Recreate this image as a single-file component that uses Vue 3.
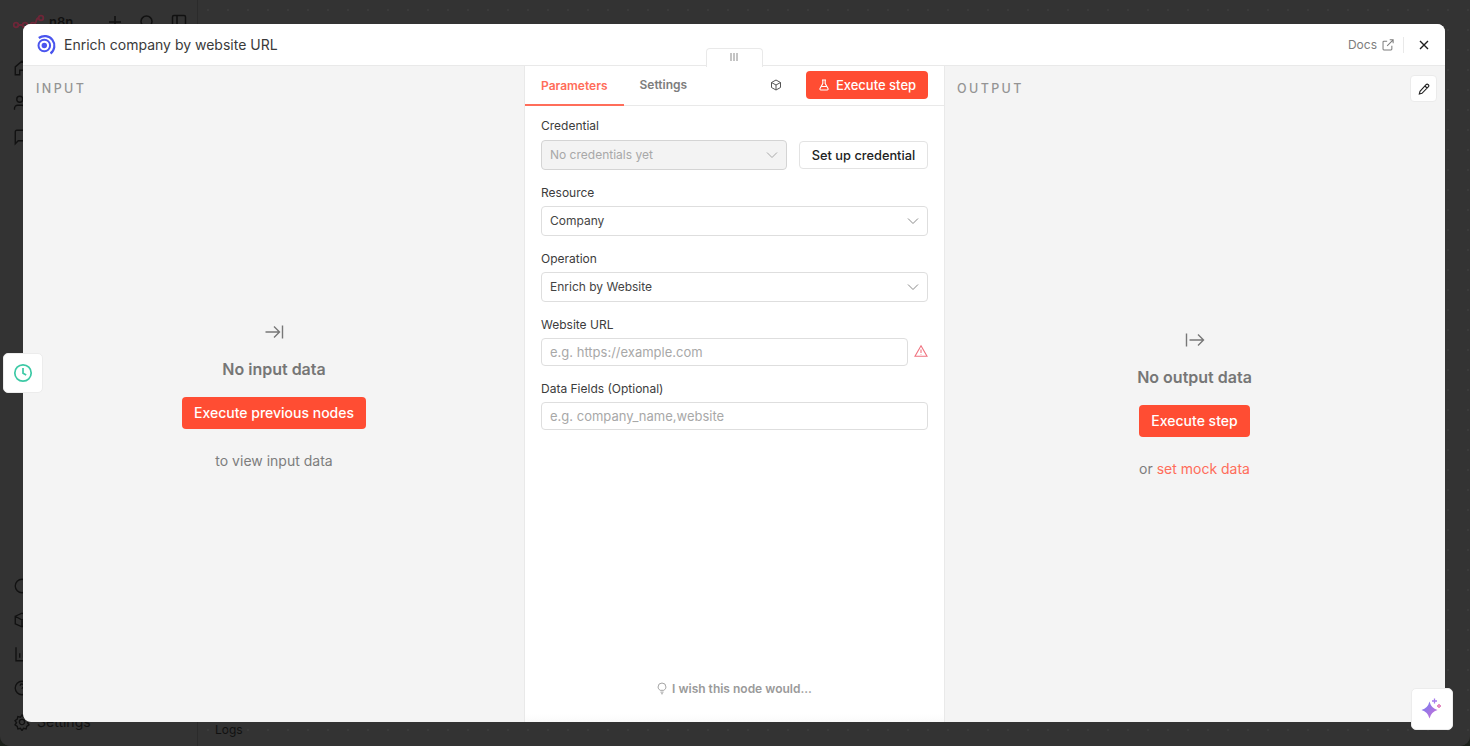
<script setup>
const sideTop = [
  'M3 10.500 12 3l9 7.500V21h-6v-6H9v6H3z',
  'M16 21v-2a4 4 0 0 0-4-4H6a4 4 0 0 0-4 4v2M9 11a4 4 0 1 0 0-8 4 4 0 0 0 0 8z',
  'M21 15a2 2 0 0 1-2 2H7l-4 4V5a2 2 0 0 1 2-2h14a2 2 0 0 1 2 2z'
]
const sideBottom = [
  'M12 3a9 9 0 1 0 0 18 9 9 0 0 0 0-18z',
  'M3 7l9-4 9 4v10l-9 4-9-4zM3 7l9 5 9-5M12 12v9',
  'M4 3v18h17M9 17v-6M14 17V7M19 17v-9',
  'M12 3a9 9 0 1 0 0 18 9 9 0 0 0 0-18zM9.500 9a2.500 2.500 0 0 1 5 .5c0 1.700-2.500 2-2.500 3.500M12 17h.01',
  'M12 8.500a3.500 3.500 0 1 0 0 7 3.500 3.500 0 0 0 0-7zM12 2.500l2 3 3.500-.8.800 3.500 3 2-2 2.800 2 2.800-3 2-.8 3.500-3.500-.8-2 3-2-3-3.500.8-.8-3.500-3-2 2-2.800-2-2.800 3-2 .8-3.500 3.500.8z'
]
</script>

<template>
  <div class="page">
    <aside class="sidebar">
      <div class="brand">
        <svg width="32" height="18" viewBox="0 0 32 18" fill="none" stroke="#6e2638" stroke-width="1.800">
          <circle cx="3" cy="12" r="2.300" /><circle cx="12" cy="12" r="2.300" /><circle cx="20" cy="12" r="2.300" /><circle cx="28" cy="5" r="2.300" />
          <path d="M5.300 12h4.400M14.300 12h3.400M22 10.500c2-1 .5-5.500 3.700-5.500" />
        </svg>
        <span class="brand-name">n8n</span>
        <svg class="brand-icon plus" width="16" height="16" viewBox="0 0 16 16" fill="none" stroke="#111" stroke-width="1.500"><path d="M8 2v12M2 8h12" /></svg>
        <svg class="brand-icon" width="16" height="16" viewBox="0 0 16 16" fill="none" stroke="#111" stroke-width="1.500"><circle cx="7.500" cy="7.500" r="5.500" /><path d="m12 12 3 3" /></svg>
        <svg class="brand-icon" width="16" height="16" viewBox="0 0 16 16" fill="none" stroke="#111" stroke-width="1.500"><rect x="1.500" y="1.500" width="13" height="13" rx="1.500" /><path d="M6 1.500v13" /></svg>
      </div>
      <nav class="nav">
        <svg v-for="p in sideTop" :key="p" width="18" height="18" viewBox="0 0 24 24" fill="none" stroke="#111" stroke-width="1.800"><path :d="p" /></svg>
      </nav>
      <nav class="nav nav-bottom">
        <svg v-for="p in sideBottom" :key="p" width="18" height="18" viewBox="0 0 24 24" fill="none" stroke="#111" stroke-width="1.800"><path :d="p" /></svg>
      </nav>
      <span class="settings-label">Settings</span>
    </aside>
    <main class="canvas">
      <div class="logs">Logs</div>
    </main>

    <section class="modal">
      <header class="modal-head">
        <svg class="node-logo" width="21" height="21" viewBox="0 0 21 21" fill="none" stroke="#4a55ee">
          <circle cx="8.300" cy="11.500" r="2.700" fill="#4a55ee" stroke="none" />
          <circle cx="8.300" cy="11.500" r="5.800" stroke-width="2" />
          <path d="M2.800 4A9.300 9.300 0 1 1 14.500 19.500" stroke-width="2.200" />
        </svg>
        <h1 class="modal-title">Enrich company by website URL</h1>
        <a class="docs">Docs
          <svg width="12" height="12" viewBox="0 0 14 14" fill="none" stroke="#7d7d7d" stroke-width="1.200"><path d="M6 2.500H2.200a1 1 0 0 0-1 1v8.300a1 1 0 0 0 1 1h8.300a1 1 0 0 0 1-1V8M6 8l7-7M9 1h4v4" /></svg>
        </a>
        <span class="head-sep"></span>
        <svg class="close" width="12" height="12" viewBox="0 0 12 12" fill="none" stroke="#1f1f1f" stroke-width="1.400"><path d="m2 2 8 8M10 2l-8 8" /></svg>
      </header>

      <div class="panels">
        <div class="panel side-panel input-panel">
          <div class="panel-label">INPUT</div>
          <div class="empty empty-input">
            <svg width="20" height="16" viewBox="0 0 20 16" fill="none" stroke="#777" stroke-width="1.400"><path d="M1.500 8h14M10 2.500 15.500 8 10 13.500M18.500 1.500v13" /></svg>
            <div class="empty-title">No input data</div>
            <button class="btn-primary big prev">Execute previous nodes</button>
            <div class="empty-note">to view input data</div>
          </div>
        </div>

        <div class="panel center">
          <div class="drag-tab">
            <svg width="8" height="8" viewBox="0 0 8 8" stroke="#8a8a8a" stroke-width="1"><path d="M1 0v8M4 0v8M7 0v8" /></svg>
          </div>
          <div class="tabs">
            <span class="tab active">Parameters</span>
            <span class="tab">Settings</span>
            <svg class="cube" width="12" height="12" viewBox="0 0 12 12" fill="none" stroke="#555" stroke-width="1"><path d="M6 1 10.500 3.500v5L6 11 1.500 8.500v-5zM1.500 3.500 6 6l4.500-2.500M6 6v5" /></svg>
            <button class="btn-primary small">
              <svg width="12" height="12" viewBox="0 0 12 12" fill="none" stroke="#fff" stroke-width="1.100"><path d="M4 1h4M4.800 1v3.500L2 9.500a1 1 0 0 0 .9 1.500h6.200a1 1 0 0 0 .9-1.500L7.200 4.500V1M3.500 7.500h5" /></svg>
              Execute step
            </button>
          </div>

          <div class="form">
            <div class="field">
              <label>Credential</label>
              <div class="row">
                <div class="control select disabled">
                  <span>No credentials yet</span>
                  <svg width="12" height="12" viewBox="0 0 12 12" fill="none" stroke="#a8a8a8" stroke-width="1"><path d="m1 3.500 5 5 5-5" /></svg>
                </div>
                <button class="btn-plain">Set up credential</button>
              </div>
            </div>
            <div class="field">
              <label>Resource</label>
              <div class="control select">
                <span>Company</span>
                <svg width="12" height="12" viewBox="0 0 12 12" fill="none" stroke="#8a8a8a" stroke-width="1"><path d="m1 3.500 5 5 5-5" /></svg>
              </div>
            </div>
            <div class="field">
              <label>Operation</label>
              <div class="control select">
                <span>Enrich by Website</span>
                <svg width="12" height="12" viewBox="0 0 12 12" fill="none" stroke="#8a8a8a" stroke-width="1"><path d="m1 3.500 5 5 5-5" /></svg>
              </div>
            </div>
            <div class="field">
              <label>Website URL</label>
              <div class="row url-row">
                <div class="control text">e.g. https://example.com</div>
                <svg class="warn" width="14" height="14" viewBox="0 0 14 14" fill="none" stroke="#f0727f" stroke-width="1.100"><path d="M7 1.800 13 12.300H1zM7 5.500v3.500M7 10.300v.5" /></svg>
              </div>
            </div>
            <div class="field">
              <label>Data Fields (Optional)</label>
              <div class="control text">e.g. company_name,website</div>
            </div>
          </div>

          <div class="wish">
            <svg width="10" height="13" viewBox="0 0 11 13" fill="none" stroke="#9a9a9a" stroke-width="1"><path d="M3.500 8.500C2 7.500 1.200 6.400 1.200 4.800a4.300 4.300 0 0 1 8.600 0c0 1.600-.8 2.700-2.300 3.700zM3.800 10.500h3.400M4.500 12.300h2" /></svg>
            I wish this node would...
          </div>
        </div>

        <div class="panel side-panel output-panel">
          <div class="panel-label">OUTPUT</div>
          <button class="edit">
            <svg width="12" height="12" viewBox="0 0 12 12" fill="none" stroke="#222" stroke-width="1.100"><path d="M8.300 1.500a1.200 1.200 0 0 1 1.700 0l.5.500a1.200 1.200 0 0 1 0 1.700L4 10.300l-2.700.7.700-2.700zM7 3l2 2" /></svg>
          </button>
          <div class="empty empty-output">
            <svg width="20" height="16" viewBox="0 0 20 16" fill="none" stroke="#777" stroke-width="1.400"><path d="M1.500 1.500v13M4.500 8h14M13 2.500 18.500 8 13 13.500" /></svg>
            <div class="empty-title">No output data</div>
            <button class="btn-primary big">Execute step</button>
            <div class="empty-note">or <span class="mock">set mock data</span></div>
          </div>
        </div>
      </div>
    </section>

    <div class="float-clock">
      <svg width="20" height="20" viewBox="0 0 20 20" fill="none" stroke="#3cc9a5" stroke-width="1.700"><circle cx="10" cy="10" r="8.200" /><path d="M10 5v5.200l3.200 1.700" /></svg>
    </div>
    <div class="float-ai">
      <svg width="22" height="22" viewBox="0 0 22 22">
        <defs>
          <linearGradient id="spark" x1="0" y1="0" x2="1" y2="1">
            <stop offset="0" stop-color="#6f7cf2" />
            <stop offset="1" stop-color="#cf6fd6" />
          </linearGradient>
        </defs>
        <path d="M8.500 3.500Q10.200 10.300 16.500 12 10.200 13.700 8.500 20.500 6.800 13.700 .5 12 6.800 10.300 8.500 3.500z" fill="url(#spark)" />
        <path d="M13.500 .5v5M11 3h5" stroke="#a67bec" stroke-width="1.300" fill="none" />
        <path d="M18 6v4M16 8h4" stroke="#e58ac0" stroke-width="1.800" fill="none" />
      </svg>
    </div>
  </div>
</template>

<style>
body { background: #1c211b; }
</style>

<style scoped>
.page {
  position: relative;
  display: flex;
  width: 1470px;
  height: 746px;
  overflow: hidden;
  border-radius: 0 0 10px 10px;
  background: #2e2e2e;
  font-family: Inter, "Liberation Sans", sans-serif;
}
.sidebar {
  position: relative;
  display: flex;
  flex-direction: column;
  flex: 0 0 198px;
  box-sizing: border-box;
  padding: 13px 0 0 13px;
  background: #333;
  border-right: 1px solid #2b2b2b;
}
.brand { display: flex; align-items: center; color: #111; font-size: 13px; font-weight: 600; }
.brand-name { margin-left: 4px; }
.brand-icon { margin-left: 16px; }
.plus { margin-left: 34px; }
.nav { display: flex; flex-direction: column; gap: 16.500px; margin-top: 28px; }
.nav-bottom { margin-top: auto; margin-bottom: 15px; gap: 16px; }
.settings-label { position: absolute; left: 37px; bottom: 16px; color: #111; font-size: 14px; }
.canvas {
  position: relative;
  flex: 1;
  background-color: #333;
  background-image: radial-gradient(#3b3b3b 1px, transparent 1px);
  background-size: 20px 20px;
}
.logs { position: absolute; left: 17px; bottom: 9px; color: #111; font-size: 12px; }

.modal {
  position: absolute;
  left: 23px;
  top: 24px;
  width: 1422px;
  height: 698px;
  display: flex;
  flex-direction: column;
  overflow: hidden;
  border-radius: 8px;
  background: #f4f4f4;
}
.modal-head {
  display: flex;
  align-items: center;
  flex: 0 0 42px;
  box-sizing: border-box;
  padding: 0 15px 0 13px;
  background: #fff;
  border-bottom: 1px solid #e9e9e9;
}
.node-logo { flex: none; }
.modal-title { margin: 0 0 0 7px; font-size: 14px; font-weight: 400; color: #3a3a3a; }
.docs { display: flex; align-items: center; gap: 5px; margin-left: auto; font-size: 12px; color: #7d7d7d; }
.head-sep { width: 1px; height: 16px; margin: 0 14px 0 9px; background: #e9e9e9; }
.close { flex: none; }

.panels { display: flex; flex: 1; min-height: 0; }
.panel { position: relative; }
.side-panel { min-width: 0; }
.input-panel { flex: 0 0 501px; }
.output-panel { flex: 1; }
.panel-label {
  margin: 16px 0 0 13px;
  font-size: 12.500px;
  line-height: 14px;
  letter-spacing: 2.400px;
  font-weight: 500;
  color: #949494;
}
.output-panel .panel-label { margin-left: 12px; }
.empty {
  position: absolute;
  left: 0;
  right: 0;
  display: flex;
  flex-direction: column;
  align-items: center;
  color: #7d7d7d;
}
.empty-input { top: 258px; padding-left: 1px; }
.empty-output { top: 266px; padding-right: 1px; }
.empty-title { margin-top: 20px; font-size: 16px; line-height: 18px; font-weight: 600; color: #767676; }
.empty-note { margin-top: 24px; font-size: 14px; line-height: 16px; color: #7d7d7d; }
.mock { color: #ff6d5a; }
button { font-family: inherit; cursor: pointer; }
.btn-primary {
  display: flex;
  align-items: center;
  justify-content: center;
  border: 0;
  border-radius: 4px;
  background: #ff4d33;
  color: #fff;
  font-weight: 500;
}
.big { box-sizing: border-box; height: 32px; margin-top: 19px; padding: 0 12px 1px; font-size: 14px; }
.prev { width: 184px; padding: 0 0 1px; }
.small { gap: 6px; width: 122px; height: 28px; margin-left: 24px; font-size: 13px; }

.center {
  display: flex;
  flex-direction: column;
  flex: 0 0 421px;
  box-sizing: border-box;
  background: #fff;
  border-left: 1px solid #e9e9e9;
  border-right: 1px solid #e9e9e9;
}
.drag-tab {
  position: absolute;
  left: 181px;
  top: -18px;
  display: flex;
  align-items: center;
  justify-content: center;
  width: 57px;
  height: 19px;
  box-sizing: border-box;
  padding: 0 1px 2px 0;
  background: #fff;
  border: 1px solid #e9e9e9;
  border-bottom: 0;
  border-radius: 4px 4px 0 0;
}
.tabs {
  display: flex;
  align-items: center;
  flex: 0 0 40px;
  min-height: 0;
  box-sizing: border-box;
  padding: 0 16px 2px;
  border-bottom: 1px solid #e9e9e9;
}
.tab {
  display: flex;
  align-items: center;
  align-self: stretch;
  font-size: 12px;
  font-weight: 600;
  color: #7d7d7d;
}
.tab.active {
  box-sizing: border-box;
  align-self: flex-start;
  margin: 0 16px -3px -16px;
  padding: 0 16px;
  height: 40px;
  color: #ff6d5a;
  border-bottom: 2px solid #ff6d5a;
}
.cube { margin-left: auto; }
.form { display: flex; flex-direction: column; padding: 12px 16px 0 16px; }
.field { display: flex; flex-direction: column; margin-bottom: 15px; }
label { font-size: 12px; line-height: 16px; color: #3c3c3c; margin-bottom: 5px; }
.field:first-child label { margin-bottom: 6px; }
.row { display: flex; align-items: center; gap: 12px; }
.url-row { gap: 6px; }
.warn { position: relative; top: -1px; }
.control {
  display: flex;
  align-items: center;
  justify-content: space-between;
  box-sizing: border-box;
  min-width: 0;
  flex: none;
  height: 28px;
  padding: 0 8px;
  background: #fff;
  border: 1px solid #dedede;
  border-radius: 4px;
  font-size: 13px;
  color: #444;
}
.row .control { flex: 1; }
.select { height: 30px; padding: 0 8px 2px; font-size: 12px; }
.select svg { position: relative; top: 1px; }
.disabled { background: #f3f3f3; color: #a8a8a8; border-color: #d4d4d4; }
.text { color: #a8a8a8; }
.btn-plain {
  flex: none;
  width: 129px;
  height: 28px;
  padding: 0;
  background: #fff;
  border: 1px solid #e3e3e3;
  border-radius: 4px;
  font-size: 12.800px;
  font-weight: 500;
  color: #222;
}
.wish {
  display: flex;
  align-items: center;
  justify-content: center;
  gap: 5px;
  margin-top: auto;
  padding: 0 0 26px 0;
  font-size: 12px;
  font-weight: 600;
  color: #9a9a9a;
  background: linear-gradient(#fff 80%, #fafafa);
}
.edit {
  position: absolute;
  right: 8px;
  top: 9px;
  display: flex;
  align-items: center;
  justify-content: center;
  width: 27px;
  height: 27px;
  padding: 0;
  background: #fff;
  border: 1px solid #ebebeb;
  border-radius: 4px;
}
.float-clock, .float-ai {
  position: absolute;
  display: flex;
  align-items: center;
  justify-content: center;
  background: #fff;
  border: 1px solid #ececec;
  box-sizing: border-box;
  border-radius: 5px;
}
.float-clock { left: 3px; top: 353px; width: 40px; height: 40px; }
.float-ai { left: 1411px; top: 688px; width: 42px; height: 42px; }
</style>
